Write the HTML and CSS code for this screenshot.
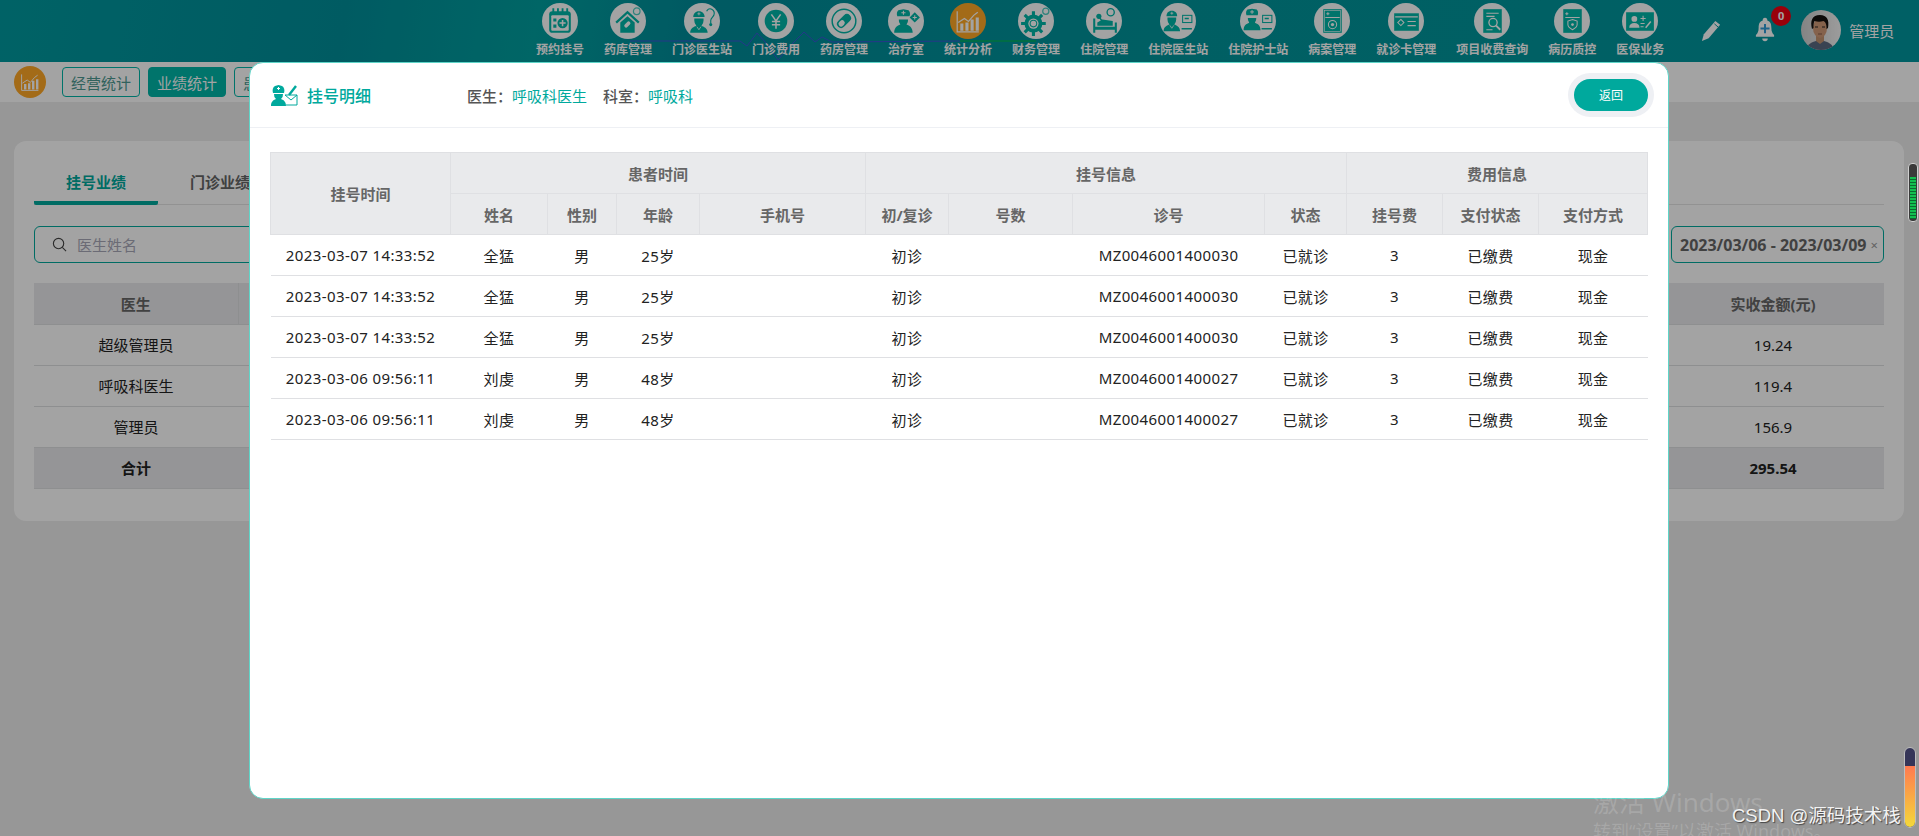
FILE: index.html
```html
<!DOCTYPE html>
<html lang="zh-CN">
<head>
<meta charset="utf-8">
<title>挂号明细</title>
<link rel="stylesheet" href="styles.css">
</head>
<body>
<svg class="sprite" xmlns="http://www.w3.org/2000/svg" aria-hidden="true">
  <defs>
    <symbol id="chart" viewBox="0 0 35 35"><g fill="none" stroke="currentColor" stroke-width="1.2"><path d="M7 8v20h21"/><path d="M8 19l6-4 4 3 5-6 4-3"/></g><path fill="currentColor" d="M10 20h3v7h-3zM15 19h3v8h-3zM20 16h3v11h-3zM25 14h3v13h-3z" /></symbol>
    <symbol id="doc" viewBox="0 0 35 35"><path fill="currentColor" d="M9 28c0-5 4-6 6-7a7 7 0 0 1-2-5v-2h9v2a7 7 0 0 1-2 5c2 1 6 2 6 7z"/><path fill="currentColor" d="M12 12.500c0-3 2-5.500 5.500-5.500s5.500 2.500 5.500 5.500z"/><path fill="none" stroke="#fff" stroke-width=".8" d="M15.500 22l2 3 2-3"/><path stroke="#fff" stroke-width=".8" d="M16 9.500h3M17.500 8v3"/></symbol>
    <symbol id="nurse" viewBox="0 0 35 35"><path fill="currentColor" d="M6 29c0-5 3-7 6-8a7 7 0 0 1-1.500-5h9a7 7 0 0 1-1.500 5c3 1 6 3 6 8z"/><path fill="currentColor" d="M9 13c-1-3 0-5 1-6l5-1 5 1c1 1 2 3 1 6z"/><path stroke="#fff" stroke-width="1" d="M13 9.500h4M15 7.500v4"/></symbol>

    <symbol id="i1" viewBox="0 0 35 35"><rect x="7" y="8" width="21" height="21" rx="3" fill="currentColor"/><path stroke="currentColor" stroke-width="1.800" d="M11 5v4M15.500 5v4M20 5v4M24.500 5v4"/><rect x="9" y="12" width="17" height="15" rx="1" fill="#fff"/><circle cx="20" cy="19.500" r="5" fill="currentColor"/><path stroke="#fff" stroke-width="1.500" d="M17 19.500h6M20 16.500v6"/><path fill="currentColor" d="M11 15h3v3h-3zM11 21h3v3h-3z"/></symbol>
    <symbol id="i2" viewBox="0 0 35 35"><path fill="none" stroke="currentColor" stroke-width="2.200" d="M6 19L17 9l11 10"/><path fill="currentColor" d="M10 19l7-6 7 6v10H10z"/><rect x="13.500" y="19" width="7" height="3.600" rx="1.800" transform="rotate(-45 17 21)" fill="#fff"/><circle cx="26" cy="8" r="3.200" fill="none" stroke="currentColor" stroke-width="1.200" opacity=".7"/></symbol>
    <symbol id="i3" viewBox="0 0 35 35"><use href="#doc" x="-3" y="1" width="35" height="35"/><path fill="none" stroke="currentColor" stroke-width="1.100" d="M22 8c1-2 3-3 5-2s3 3 2 6c-1 2-3 3-3 5v3"/><circle cx="26" cy="21" r="1.500" fill="currentColor"/></symbol>
    <symbol id="i4" viewBox="0 0 35 35"><circle cx="17.500" cy="17.500" r="11" fill="currentColor"/><path fill="none" stroke="#fff" stroke-width="1.500" d="M13 11l4.500 6.500L22 11M17.500 17.500V25M13.500 18h8M13.500 21.200h8"/></symbol>
    <symbol id="i5" viewBox="0 0 35 35"><circle cx="17.500" cy="17.500" r="11.500" fill="none" stroke="currentColor" stroke-width="1.400"/><g transform="rotate(-45 17.500 17.500)"><rect x="9.500" y="13.500" width="16" height="8" rx="4" fill="currentColor"/><rect x="11" y="15" width="6.500" height="5" rx="2.500" fill="#fff"/></g></symbol>
    <symbol id="i6" viewBox="0 0 35 35"><use href="#nurse" x="0" y="0" width="35" height="35"/><path fill="currentColor" d="M26 9l5 5-5 5-5-5z"/><path stroke="#fff" stroke-width="1" d="M24 14h4M26 12v4"/></symbol>
    <symbol id="i8" viewBox="0 0 35 35"><circle cx="15" cy="20" r="6.500" fill="none" stroke="currentColor" stroke-width="4.500"/><path stroke="currentColor" stroke-width="3" d="M15 8v24M3 20h24M6.500 11.500l17 17M6.500 28.500l17-17"/><circle cx="15" cy="20" r="5" fill="#fff"/><circle cx="15" cy="20" r="3.200" fill="none" stroke="currentColor" stroke-width="1"/><circle cx="27" cy="8" r="3" fill="none" stroke="currentColor" stroke-width="1.200" opacity=".7"/></symbol>
    <symbol id="i9" viewBox="0 0 35 35"><path fill="currentColor" d="M7 15h2v8h19v-4h2v10h-2v-3H9v3H7z"/><path fill="currentColor" d="M11 19l5-3 10 1.500V22H11z"/><circle cx="12.500" cy="13" r="2.500" fill="currentColor"/><path stroke="currentColor" stroke-width="1.500" d="M13 14l3 4"/><circle cx="24" cy="9" r="3.500" fill="none" stroke="currentColor" stroke-width="1.300"/></symbol>
    <symbol id="i10" viewBox="0 0 35 35"><use href="#doc" x="-5" y="1" width="33" height="33"/><rect x="22" y="12" width="9" height="7" fill="none" stroke="currentColor" stroke-width="1"/><path stroke="currentColor" stroke-width="1.400" d="M21 25h10M24 15h4"/></symbol>
    <symbol id="i11" viewBox="0 0 35 35"><use href="#nurse" x="-2" y="0" width="32" height="32"/><rect x="22" y="12" width="9" height="7" fill="none" stroke="currentColor" stroke-width="1"/><path stroke="currentColor" stroke-width="1.400" d="M21 25h10M24 15h4"/></symbol>
    <symbol id="i12" viewBox="0 0 35 35"><rect x="9" y="6" width="18" height="23" fill="currentColor"/><rect x="10.300" y="7.300" width="15.400" height="20.400" fill="none" stroke="#fff" stroke-width=".6"/><path stroke="#fff" stroke-width="1" d="M12 10.500h3M13.500 9v3M11 14h14"/><circle cx="18" cy="21" r="4" fill="none" stroke="#fff" stroke-width="1"/><circle cx="18" cy="21" r="1.600" fill="#fff"/></symbol>
    <symbol id="i13" viewBox="0 0 35 35"><rect x="6" y="10" width="24" height="17" fill="currentColor"/><path stroke="#fff" stroke-width="1" d="M7 13.500h22M19 18h8M19 22h8"/><path fill="none" stroke="#fff" stroke-width="1" d="M12.500 16l3 3-3 3-3-3z"/></symbol>
    <symbol id="i14" viewBox="0 0 35 35"><rect x="9" y="6" width="18" height="23" fill="currentColor"/><path stroke="#fff" stroke-width="1" d="M12 10h12M12 13h8M12 26h6"/><circle cx="18.500" cy="19" r="4" fill="none" stroke="#fff" stroke-width="1.300"/><path stroke="#fff" stroke-width="1.800" d="M21.500 22l4 4"/></symbol>
    <symbol id="i15" viewBox="0 0 35 35"><rect x="9" y="6" width="18" height="23" fill="currentColor"/><path stroke="#fff" stroke-width="1" d="M11 10.500h3M12.500 9v3M11 14h14"/><path fill="none" stroke="#fff" stroke-width="1" d="M18 16l4.500 1.500v3.500c0 2.500-2.500 4-4.500 5-2-1-4.500-2.500-4.500-5v-3.500z"/><circle cx="18" cy="21" r="1.300" fill="#fff"/></symbol>
    <symbol id="i16" viewBox="0 0 35 35"><rect x="4" y="9" width="27" height="18" fill="currentColor"/><circle cx="12" cy="15.500" r="2.800" fill="#fff"/><path fill="#fff" d="M7 24c0-3 2-4.500 5-4.500s5 1.500 5 4.500z"/><path stroke="#fff" stroke-width="1" d="M18 15h5M20.500 12.500v5M18 20h4M18 23h3"/><path stroke="#fff" stroke-width="1.500" d="M23 24l5-6"/></symbol>
  </defs>
</svg>

<div class="app">
  <header class="topbar">
    <svg class="pulse" viewBox="0 0 1919 62" xmlns="http://www.w3.org/2000/svg" aria-hidden="true">
      <polyline class="pulse-blue" points="630,41 740,41 747,46 757,33 767,44 778,60 790,46 804,32 815,42 822,37 832,42 960,41"/>
      <polyline class="pulse-green" points="960,41 1036,41"/>
    </svg>
    <nav class="nav">
      <a class="nav-item"><span class="nav-circle"><svg class="nav-icon"><use href="#i1"/></svg></span><span class="nav-label">预约挂号</span></a>
      <a class="nav-item"><span class="nav-circle"><svg class="nav-icon"><use href="#i2"/></svg></span><span class="nav-label">药库管理</span></a>
      <a class="nav-item"><span class="nav-circle"><svg class="nav-icon"><use href="#i3"/></svg></span><span class="nav-label">门诊医生站</span></a>
      <a class="nav-item"><span class="nav-circle"><svg class="nav-icon"><use href="#i4"/></svg></span><span class="nav-label">门诊费用</span></a>
      <a class="nav-item"><span class="nav-circle"><svg class="nav-icon"><use href="#i5"/></svg></span><span class="nav-label">药房管理</span></a>
      <a class="nav-item"><span class="nav-circle"><svg class="nav-icon"><use href="#i6"/></svg></span><span class="nav-label">治疗室</span></a>
      <a class="nav-item is-active"><span class="nav-circle"><svg class="nav-icon"><use href="#chart"/></svg></span><span class="nav-label">统计分析</span></a>
      <a class="nav-item"><span class="nav-circle"><svg class="nav-icon"><use href="#i8"/></svg></span><span class="nav-label">财务管理</span></a>
      <a class="nav-item"><span class="nav-circle"><svg class="nav-icon"><use href="#i9"/></svg></span><span class="nav-label">住院管理</span></a>
      <a class="nav-item"><span class="nav-circle"><svg class="nav-icon"><use href="#i10"/></svg></span><span class="nav-label">住院医生站</span></a>
      <a class="nav-item"><span class="nav-circle"><svg class="nav-icon"><use href="#i11"/></svg></span><span class="nav-label">住院护士站</span></a>
      <a class="nav-item"><span class="nav-circle"><svg class="nav-icon"><use href="#i12"/></svg></span><span class="nav-label">病案管理</span></a>
      <a class="nav-item"><span class="nav-circle"><svg class="nav-icon"><use href="#i13"/></svg></span><span class="nav-label">就诊卡管理</span></a>
      <a class="nav-item"><span class="nav-circle"><svg class="nav-icon"><use href="#i14"/></svg></span><span class="nav-label">项目收费查询</span></a>
      <a class="nav-item"><span class="nav-circle"><svg class="nav-icon"><use href="#i15"/></svg></span><span class="nav-label">病历质控</span></a>
      <a class="nav-item"><span class="nav-circle"><svg class="nav-icon"><use href="#i16"/></svg></span><span class="nav-label">医保业务</span></a>
    </nav>
    <div class="tools">
      <svg class="pencil" viewBox="0 0 24 24" xmlns="http://www.w3.org/2000/svg" aria-hidden="true"><path d="M2 23l2-7L16 2l5 4L9 20z"/><path class="pencil-cut" d="M15 5l4 3.500"/></svg>
      <span class="bell">
        <svg class="bell-icon" viewBox="0 0 22 28" xmlns="http://www.w3.org/2000/svg" aria-hidden="true"><path class="bell-body" d="M11 1a2.500 2.500 0 0 1 2.500 3C17 5 18 8 18 12c0 4 1 6 3 8v2H1v-2c2-2 3-4 3-8 0-4 1-7 4.500-8A2.500 2.500 0 0 1 11 1z"/><path class="bell-body" d="M8 24h6a3 3 0 0 1-6 0z"/><path class="bell-plus" d="M11 8v10M6 13h10"/></svg>
        <span class="badge">0</span>
      </span>
      <svg class="avatar" viewBox="0 0 40 40" xmlns="http://www.w3.org/2000/svg" aria-hidden="true"><defs><clipPath id="av"><circle cx="20" cy="20" r="20"/></clipPath><linearGradient id="avbg" x1="0" y1="0" x2="1" y2="0"><stop offset="0" stop-color="#cfcfcf"/><stop offset="1" stop-color="#f4f4f4"/></linearGradient></defs><g clip-path="url(#av)"><rect width="40" height="40" fill="url(#avbg)"/><path fill="#5a6a80" d="M5 40c1-6 6-8 10-9h8c4 1 9 3 10 9z"/><path fill="#c4936f" d="M15 25h8v6l-4 3-4-3z"/><ellipse cx="19" cy="18" rx="7" ry="10" fill="#d09a78"/><path fill="#15110f" d="M11 19c-2-8 0-14 8-14 7 0 9.500 5 8 13l-1.500 1c0-5-1-7-3-8-3 1-6 1-9 0-1 2-1 4-1 7z"/><path stroke="#2a2320" stroke-width="1.200" d="M14 17h3M21 17h3"/><path stroke="#8a5a48" stroke-width="1" d="M17 24h4"/></g></svg>
      <span class="user">管理员</span>
    </div>
  </header>

  <div class="subbar">
    <svg class="sub-icon"><use href="#chart"/></svg>
    <a class="sub-btn">经营统计</a>
    <a class="sub-btn is-on">业绩统计</a>
    <a class="sub-btn">患者统计</a>
  </div>

  <main class="card">
    <div class="tabs">
      <a class="tab is-on">挂号业绩</a>
      <a class="tab">门诊业绩</a>
    </div>
    <div class="filters">
      <label class="search">
        <svg class="search-icon" viewBox="0 0 16 16" xmlns="http://www.w3.org/2000/svg" aria-hidden="true"><circle cx="7" cy="7" r="5.500"/><path d="M11 11l4 4"/></svg>
        <span class="placeholder">医生姓名</span>
      </label>
      <div class="date"><span>2023/03/06 - 2023/03/09</span><i class="date-x">×</i></div>
    </div>
    <table class="stats">
      <colgroup><col class="stats-a"><col><col class="stats-z"></colgroup>
      <thead><tr><th>医生</th><th></th><th>实收金额(元)</th></tr></thead>
      <tbody>
        <tr><td>超级管理员</td><td></td><td>19.24</td></tr>
        <tr><td>呼吸科医生</td><td></td><td>119.4</td></tr>
        <tr><td>管理员</td><td></td><td>156.9</td></tr>
        <tr class="total"><td>合计</td><td></td><td>295.54</td></tr>
      </tbody>
    </table>
  </main>
</div>

<div class="shade"></div>

<section class="dialog">
  <div class="dialog-head">
    <svg class="dialog-icon" viewBox="0 0 28 22" xmlns="http://www.w3.org/2000/svg" aria-hidden="true"><path class="di-fill" d="M1 22c0-4 2-6 5-7a6 6 0 0 1-2-5h9a6 6 0 0 1-2 5c3 1 5 3 5 7z"/><path class="di-fill" d="M3 9c-1-3 0-6 2-7l3.500-1L12 2c2 1 3 4 2 7z"/><path class="di-plus" d="M7 4.500h3M8.500 3v3"/><path class="di-line" d="M15 11h12v10H16"/><path class="di-line" d="M15 11l6 5 6-5"/><path class="di-pen" d="M19 11l7-9"/></svg>
    <h2 class="dialog-title">挂号明细</h2>
    <p class="dialog-info"><b>医生：</b><span>呼吸科医生</span><b class="info-gap">科室：</b><span>呼吸科</span></p>
    <button class="back" type="button">返回</button>
  </div>
  <div class="dialog-body">
    <table class="detail">
      <colgroup>
        <col class="w180"><col class="w97"><col class="w69"><col class="w83"><col class="w166"><col class="w83"><col class="w124"><col class="w192"><col class="w82"><col class="w96"><col class="w96"><col class="w110">
      </colgroup>
      <thead>
        <tr><th rowspan="2">挂号时间</th><th colspan="4">患者时间</th><th colspan="4">挂号信息</th><th colspan="3">费用信息</th></tr>
        <tr><th>姓名</th><th>性别</th><th>年龄</th><th>手机号</th><th>初/复诊</th><th>号数</th><th>诊号</th><th>状态</th><th>挂号费</th><th>支付状态</th><th>支付方式</th></tr>
      </thead>
      <tbody>
        <tr><td>2023-03-07 14:33:52</td><td>全猛</td><td>男</td><td>25岁</td><td></td><td>初诊</td><td></td><td>MZ0046001400030</td><td>已就诊</td><td>3</td><td>已缴费</td><td>现金</td></tr>
        <tr><td>2023-03-07 14:33:52</td><td>全猛</td><td>男</td><td>25岁</td><td></td><td>初诊</td><td></td><td>MZ0046001400030</td><td>已就诊</td><td>3</td><td>已缴费</td><td>现金</td></tr>
        <tr><td>2023-03-07 14:33:52</td><td>全猛</td><td>男</td><td>25岁</td><td></td><td>初诊</td><td></td><td>MZ0046001400030</td><td>已就诊</td><td>3</td><td>已缴费</td><td>现金</td></tr>
        <tr><td>2023-03-06 09:56:11</td><td>刘虔</td><td>男</td><td>48岁</td><td></td><td>初诊</td><td></td><td>MZ0046001400027</td><td>已就诊</td><td>3</td><td>已缴费</td><td>现金</td></tr>
        <tr><td>2023-03-06 09:56:11</td><td>刘虔</td><td>男</td><td>48岁</td><td></td><td>初诊</td><td></td><td>MZ0046001400027</td><td>已就诊</td><td>3</td><td>已缴费</td><td>现金</td></tr>
      </tbody>
    </table>
  </div>
</section>

<div class="meter-top"><span class="meter-bars"></span></div>
<div class="meter-bottom"><span class="meter-fill"></span></div>
<div class="activate"><div class="activate-a">激活 Windows</div><div class="activate-b">转到“设置”以激活 Windows。</div></div>
<div class="csdn">CSDN @源码技术栈</div>
</body>
</html>
```

FILE: styles.css
```css
* { box-sizing: border-box; }
html, body { margin: 0; padding: 0; }
body {
  position: relative;
  width: 1919px;
  height: 836px;
  overflow: hidden;
  background: #ececec;
  color: #222;
  font-family: "Noto Sans", "Noto Sans CJK SC", sans-serif;
  font-size: 15px;
}
.sprite { position: absolute; width: 0; height: 0; }

/* top bar */
.topbar {
  position: relative;
  height: 62px;
  display: flex;
  padding-left: 536px;
  background: linear-gradient(100deg, #009aa0 0%, #008f9a 18%, #00a0a0 28%, #008d9a 36%, #00959c 60%, #00979e 100%);
}
.pulse { position: absolute; left: 0; top: 0; width: 1919px; height: 62px; }
.pulse polyline { fill: none; stroke-width: 1; }
.pulse-blue { stroke: #3b55d8; }
.pulse-green { stroke: #00c040; stroke-width: 2; }
.nav { position: relative; display: flex; gap: 20px; height: 62px; }
.nav-item { display: flex; flex-direction: column; align-items: center; padding-top: 3px; }
.nav-circle {
  width: 36px; height: 36px; border-radius: 50%;
  background: #fff; color: #00b6a8;
  display: flex; align-items: center; justify-content: center;
}
.nav-icon { width: 36px; height: 36px; display: block; }
.nav-label { margin-top: 3px; font-size: 12px; line-height: 16px; font-weight: 700; color: #fff; white-space: nowrap; }
.is-active .nav-circle { background: #ffa826; color: #fff; }
.tools { position: relative; flex: 1; display: flex; align-items: center; padding-left: 36px; height: 60px; }
.pencil { width: 23px; height: 23px; fill: #fff; flex: none; }
.pencil-cut { fill: none; stroke: #00959c; stroke-width: 1; }
.bell { position: relative; display: block; width: 22px; height: 28px; margin-left: 32px; flex: none; }
.bell-icon { display: block; width: 20px; height: 27px; }
.bell-body { fill: #fff; }
.bell-plus { fill: none; stroke: #2f9bd6; stroke-width: 2.200; }
.badge {
  position: absolute; left: 16px; top: -10px;
  width: 20px; height: 20px; border-radius: 50%;
  background: #f00010; color: #fff;
  font-size: 11px; font-weight: 700; line-height: 20px; text-align: center;
}
.avatar { width: 40px; height: 40px; margin-left: 24px; flex: none; }
.user { margin-left: 8px; font-size: 15px; color: #fff; white-space: nowrap; }

/* sub bar */
.subbar { height: 40px; background: #fff; display: flex; align-items: center; padding-left: 14px; gap: 8px; }
.sub-icon { width: 32px; height: 32px; padding: 2px; border-radius: 50%; background: #ffa826; color: #fff; margin-right: 8px; }
.sub-btn {
  width: 78px; height: 30px; border: 1px solid #00b6a8; border-radius: 4px;
  display: flex; align-items: center; justify-content: center;
  font-size: 15px; color: #4d9a92; white-space: nowrap;
}
.sub-btn.is-on { background: #00b6a8; color: #fff; }

/* card */
.card {
  margin: 39px 15px 0 14px;
  height: 380px;
  padding: 0 20px;
  background: #fff;
  border-radius: 12px;
}
.tabs { display: flex; height: 64px; padding-top: 20px; border-bottom: 1px solid #e4e4e4; }
.tab {
  width: 124px; height: 44px; text-align: center;
  font-size: 15px; line-height: 42px; font-weight: 700; color: #666;
}
.tab.is-on { color: #00a99d; border-bottom: 4px solid #00a99d; border-radius: 0 0 2px 2px; }
.filters { display: flex; justify-content: space-between; margin-top: 21px; }
.search, .date { height: 37px; border: 1px solid #00a99d; border-radius: 6px; display: flex; align-items: center; }
.search { width: 400px; padding-left: 17px; }
.search-icon { width: 15px; height: 15px; fill: none; stroke: #444; stroke-width: 1.200; }
.placeholder { margin-left: 10px; color: #a8a8b8; }
.date { width: 213px; padding-left: 8px; font-weight: 700; color: #666; font-size: 16px; white-space: nowrap; }
.date-x { margin-left: 4px; font-style: normal; font-weight: 400; font-size: 13px; color: #999; }
.stats { width: 100%; margin-top: 20px; table-layout: fixed; border-collapse: collapse; text-align: center; }
.stats-a { width: 204px; }
.stats-z { width: 222px; }
.stats th, .stats td { height: 41px; padding: 0; border-bottom: 1px solid #dfe0e2; font-size: 15px; }
.stats th { background: #e9eaec; color: #666; font-weight: 700; }
.stats th:first-child { border-right: 1px solid #dfe0e2; }
.total td { background: #e9eaec; font-weight: 700; color: #222; }

/* overlay */
.shade { position: absolute; inset: 0; background: rgba(0, 0, 0, .36); }

/* dialog */
.dialog {
  position: absolute; left: 249px; top: 62px;
  width: 1420px; height: 737px;
  background: #fff;
  border: 1px solid #5fd5c8;
  border-radius: 14px;
}
.dialog-head {
  height: 65px;
  display: flex; align-items: center;
  padding: 0 20px;
  border-bottom: 1px solid #eef0f4;
}
.dialog-icon { width: 28px; height: 22px; margin-right: 9px; flex: none; }
.di-fill { fill: #00a99d; }
.di-plus { fill: none; stroke: #fff; stroke-width: 1; }
.di-line { fill: none; stroke: #00a99d; stroke-width: 1; }
.di-pen { fill: none; stroke: #00a99d; stroke-width: 2.400; }
.dialog-title { margin: 0; width: 160px; font-size: 16px; font-weight: 500; color: #00a99d; flex: none; }
.dialog-info { margin: 0; font-size: 15px; color: #00a99d; }
.dialog-info b { font-weight: 500; color: #555; }
.info-gap { margin-left: 16px; }
.back {
  margin-left: auto; width: 74px; height: 32px;
  border: 0; border-radius: 16px;
  background: #00a99d; color: #fff;
  font: 400 12px "Noto Sans", "Noto Sans CJK SC", sans-serif;
  box-shadow: 0 0 0 6px #eef0f4;
}
.dialog-body { padding: 24px 19px 0 20px; }
.detail { width: 1377px; table-layout: fixed; border-collapse: collapse; text-align: center; }
.w180 { width: 180px; } .w97 { width: 97px; } .w69 { width: 69px; } .w83 { width: 83px; }
.w166 { width: 166px; } .w124 { width: 124px; } .w192 { width: 192px; } .w82 { width: 82px; }
.w96 { width: 96px; } .w110 { width: 109px; }
.detail th, .detail td { height: 41px; padding: 0; font-size: 15px; letter-spacing: .4px; }
.detail th { background: #e9eaec; border: 1px solid #dfe0e3; color: #666; font-weight: 700; letter-spacing: 0; }
.detail td { border-bottom: 1px solid #dfe0e3; color: #222; white-space: nowrap; }

/* desktop overlays */
.meter-top {
  position: absolute; left: 1908px; top: 163px; width: 10px; height: 59px;
  border: 1px solid #cfcfcf; border-radius: 4px; background: #3a3a3a; padding: 13px 1px 2px;
}
.meter-bars { display: block; height: 100%; background: repeating-linear-gradient(#12c050 0 2px, #0a6a30 2px 3px); }
.meter-bottom {
  position: absolute; left: 1904px; top: 747px; width: 12px; height: 81px;
  border: 1px solid #bdbdbd; border-radius: 6px; background: #353558; padding-top: 18px; overflow: hidden;
}
.meter-fill { display: block; height: 100%; background: linear-gradient(#ff7a50, #f4d83a); }
.activate { position: absolute; left: 1593px; top: 785px; color: rgba(255, 255, 255, .16); white-space: nowrap; }
.activate-a { font-size: 26px; line-height: 34px; }
.activate-b { font-size: 18px; line-height: 24px; }
.csdn {
  position: absolute; left: 1732px; top: 803px;
  font-size: 18.500px; line-height: 26px; color: #f2f2f2;
  text-shadow: 1px 1px 1px #444; white-space: nowrap;
  font-family: "Liberation Sans", "Noto Sans CJK SC", sans-serif;
}
```
